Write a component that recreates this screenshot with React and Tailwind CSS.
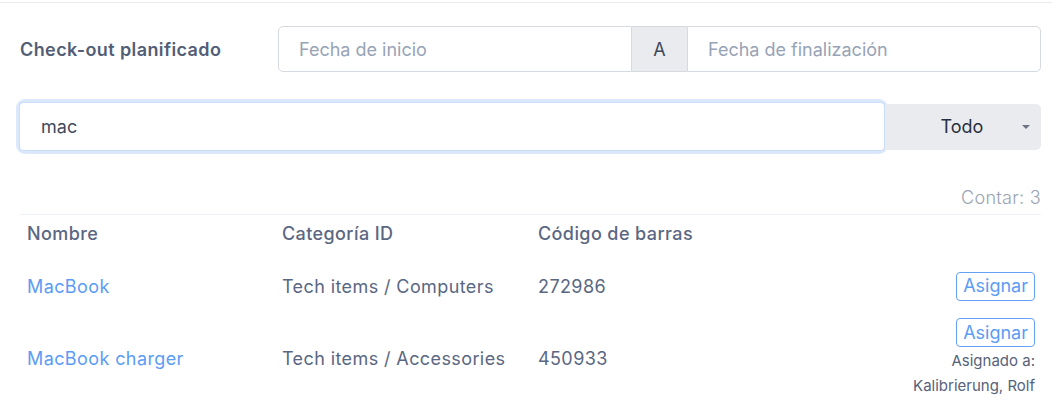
import React, { useState } from 'react';

// ─── data ────────────────────────────────────────────────────────────────────

const ITEMS = [
  { id: 1, name: 'MacBook', category: 'Tech items / Computers', barcode: '272986', assignedTo: null },
  { id: 2, name: 'MacBook charger', category: 'Tech items / Accessories', barcode: '450933', assignedTo: 'Kalibrierung, Rolf' },
];

const FONT = "font-['Inter','Liberation_Sans',sans-serif]";

// ─── App ─────────────────────────────────────────────────────────────────────

const App = () => {
  const [query, setQuery] = useState('mac');

  return (
    <div className={`${FONT} min-h-[412px] bg-white text-[18px] text-[#5a6783]`}>
      <div className="mt-[2px] border-t border-[#e8eaee]" />

      <div className="pl-5 pr-[11px]">
        {/* Planned checkout */}
        <div className="mt-[23px] flex items-center">
          <label className="w-[258px] shrink-0 font-semibold tracking-[0.4px] text-[#525e76]">Check-out planificado</label>
          <div className="flex h-[46px] flex-1">
            <input
              placeholder="Fecha de inicio"
              className="w-0 flex-1 rounded-l-[5px] border border-[#d5d9e0] px-5 text-[18px] text-[#3f4a5e] outline-none placeholder:text-[#97a3b6]"
            />
            <span className="flex w-[55px] items-center justify-center border-y border-[#d5d9e0] bg-[#e9ebef] text-[#3d4759]">
              A
            </span>
            <input
              placeholder="Fecha de finalización"
              className="w-0 flex-1 rounded-r-[5px] border border-[#d5d9e0] px-5 text-[18px] text-[#3f4a5e] outline-none placeholder:text-[#97a3b6]"
            />
          </div>
        </div>

        {/* Search */}
        <div className="mt-[30px] flex items-center">
          <div className="-ml-[1px] flex-1 rounded-[6px] ring-[3px] ring-[#dbe8fc]">
            <input
              value={query}
              onChange={(e) => setQuery(e.target.value)}
              className="block h-[49px] w-full rounded-[4px] border border-[#c9dcf8] px-[21px] text-[18px] text-[#3f4a5e] caret-[#1f2937] outline-none"
            />
          </div>
          <div className="relative flex h-[46px] w-[156px] shrink-0 items-center justify-center rounded-r-[5px] bg-[#e9ebef] text-[#283040]">
            <span className="pr-[2px]">Todo</span>
            <span className="absolute right-[11px] top-[21px] h-0 w-0 border-x-[4px] border-t-[4px] border-x-transparent border-t-[#6b7384]" />
          </div>
        </div>

        {/* Count */}
        <div className="mt-[33px] text-right font-light leading-[27px] tracking-[0.3px] text-[#9aa3b3]">Contar: 3</div>

        {/* Table */}
        <div className="mt-[3px] border-t border-[#edf0f4]">
          <div className="grid h-[36px] grid-cols-[255px_256px_1fr_auto] items-center font-medium tracking-[0.4px] text-[#5b6782]">
            <span className="px-[7px]">Nombre</span>
            <span className="px-[7px]">Categoría ID</span>
            <span className="px-[7px]">Código de barras</span>
            <span />
          </div>

          {ITEMS.map((item, i) => (
            <div
              key={item.id}
              className={`grid grid-cols-[255px_256px_1fr_auto] items-center tracking-[0.4px] ${i === 0 ? 'mt-[11px] h-[48px]' : 'py-2'}`}
            >
              <a href="#" className="px-[7px] text-[#5b9cf5]">{item.name}</a>
              <span className="px-[7px]">{item.category}</span>
              <span className="px-[7px]">{item.barcode}</span>
              <div className="flex flex-col items-end pr-[6px]">
                <button className="h-[29px] rounded-[4px] border border-[#64a1f7] px-[6px] leading-none tracking-normal text-[#5b9cf5]">
                  Asignar
                </button>
                {item.assignedTo && (
                  <div className="mt-[1px] text-right text-[15px] leading-[25px] tracking-normal text-[#56627a]">
                    <div>Asignado a:</div>
                    <div>{item.assignedTo}</div>
                  </div>
                )}
              </div>
            </div>
          ))}
        </div>
      </div>
    </div>
  );
};

export default App;
